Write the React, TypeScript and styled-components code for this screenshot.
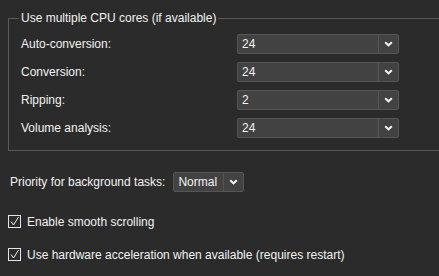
import React, { useState } from 'react'
import styled, { createGlobalStyle } from 'styled-components'

const GlobalStyle = createGlobalStyle`
  html, body {
    margin: 0;
    padding: 0;
    background: #2b2b2b;
  }
  body {
    font-family: "Liberation Sans", Arial, sans-serif;
    font-size: 12px;
    color: #f2f2f2;
  }
`

const Page = styled.div`
  width: 439px;
  height: 276px;
  overflow: hidden;
  box-sizing: border-box;
  padding: 11px 0 0 8px;
`

const Group = styled.fieldset`
  margin: 0;
  padding: 8px 0 12px 12px;
  border: 1px solid #5a5a5a;
  border-right: none;
  min-width: 0;
`

const Legend = styled.legend`
  padding: 0 2px;
  margin-left: -2px;
  line-height: 15px;
`

const CoreGrid = styled.div`
  display: grid;
  grid-template-columns: 216px 162px;
  grid-auto-rows: 20px;
  row-gap: 8px;
  align-items: center;
`

const Label = styled.span`
  white-space: nowrap;
`

const SelectBox = styled.div<{ $width: number }>`
  display: flex;
  width: ${p => p.$width}px;
  height: 20px;
  box-sizing: border-box;
  border: 1px solid #555;
  border-radius: 2px;
  background: #424242;
`

const SelectValue = styled.span`
  flex: 1;
  padding-left: 4px;
  line-height: 18px;
`

const SelectButton = styled.span`
  width: 19px;
  border-left: 1px solid #555;
  display: flex;
  align-items: center;
  justify-content: center;
`

const PriorityRow = styled.div`
  display: flex;
  align-items: center;
  gap: 8px;
  margin: 21px 0 0 2px;
`

const CheckList = styled.div`
  display: flex;
  flex-direction: column;
  gap: 20px;
  margin-top: 23px;
`

const CheckRow = styled.label`
  display: flex;
  align-items: center;
  gap: 6px;
  height: 13px;
`

const CheckBox = styled.span`
  width: 13px;
  height: 13px;
  box-sizing: border-box;
  border: 1px solid #e6e6e6;
  display: flex;
  align-items: center;
  justify-content: center;
`

function Chevron() {
  return (
    <svg width="9" height="6" viewBox="0 0 9 6">
      <path d="M1.2 1.2 L4.5 4.3 L7.8 1.2" fill="none" stroke="#f2f2f2" strokeWidth="2" />
    </svg>
  )
}

function Select({ value, width }: { value: string; width: number }) {
  return (
    <SelectBox $width={width}>
      <SelectValue>{value}</SelectValue>
      <SelectButton>
        <Chevron />
      </SelectButton>
    </SelectBox>
  )
}

function Check({ label }: { label: string }) {
  const [checked, setChecked] = useState(true)
  return (
    <CheckRow onClick={() => setChecked(!checked)}>
      <CheckBox>
        {checked && (
          <svg width="11" height="11" viewBox="0 0 11 11">
            <path d="M2 5.5 L4.5 9 L9.5 1" fill="none" stroke="#f2f2f2" strokeWidth="1" />
          </svg>
        )}
      </CheckBox>
      <span>{label}</span>
    </CheckRow>
  )
}

const cores = [
  { label: 'Auto-conversion:', value: '24' },
  { label: 'Conversion:', value: '24' },
  { label: 'Ripping:', value: '2' },
  { label: 'Volume analysis:', value: '24' },
]

export default function App() {
  return (
    <Page>
      <GlobalStyle />
      <Group>
        <Legend>Use multiple CPU cores (if available)</Legend>
        <CoreGrid>
          {cores.map(c => (
            <React.Fragment key={c.label}>
              <Label>{c.label}</Label>
              <Select value={c.value} width={162} />
            </React.Fragment>
          ))}
        </CoreGrid>
      </Group>
      <PriorityRow>
        <Label>Priority for background tasks:</Label>
        <Select value="Normal" width={71} />
      </PriorityRow>
      <CheckList>
        <Check label="Enable smooth scrolling" />
        <Check label="Use hardware acceleration when available (requires restart)" />
      </CheckList>
    </Page>
  )
}
